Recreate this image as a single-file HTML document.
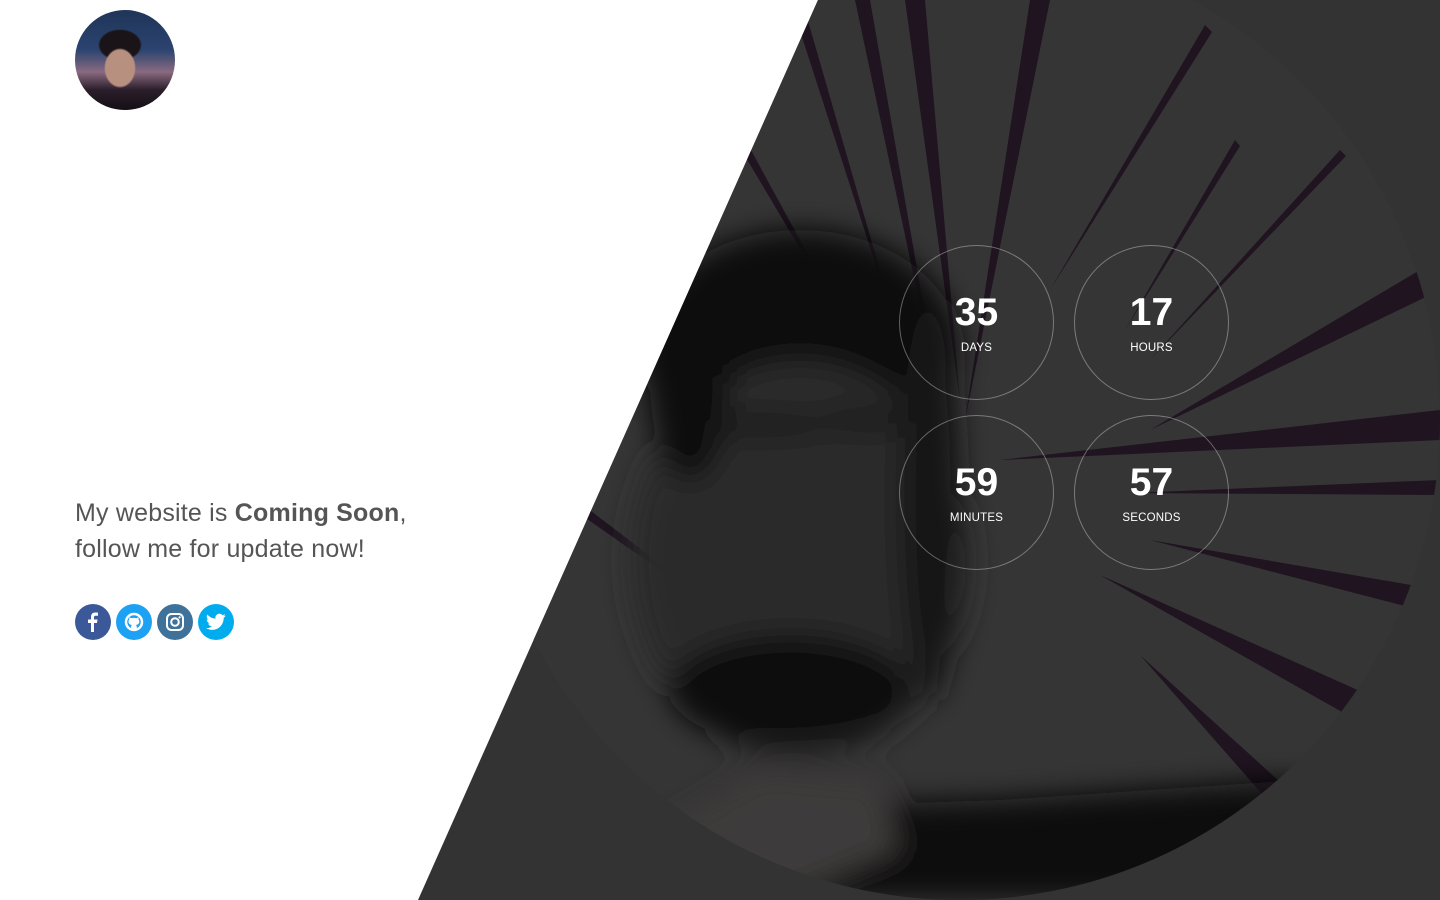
<!DOCTYPE html>
<html><head><meta charset="utf-8"><style>
*{margin:0;padding:0;box-sizing:border-box}
body{width:1440px;height:900px;overflow:hidden;background:#fff;font-family:"Liberation Sans",sans-serif;position:relative}
.bg{position:absolute;left:0;top:0;width:1440px;height:900px;clip-path:polygon(818px 0,1440px 0,1440px 900px,418px 900px)}
.avatar{position:absolute;left:75px;top:10px;width:100px;height:100px;border-radius:50%;overflow:hidden;background:radial-gradient(ellipse 16px 20px at 45% 58%,#b89080 0 90%,transparent 100%),radial-gradient(ellipse 22px 16px at 45% 35%,#1a1418 0 90%,transparent 100%),linear-gradient(180deg,#1f3458 0%,#2b4470 40%,#8a6a80 62%,#2a1e2a 80%,#150f16 100%)}
.txt{position:absolute;left:75px;top:495px;font-size:25px;line-height:36px;color:#555;letter-spacing:0.2px}
.txt b{color:#555}
.soc{position:absolute;left:75px;top:604px;display:flex;gap:5px}
.soc div{width:36px;height:36px;border-radius:50%;display:flex;align-items:center;justify-content:center}
.c{position:absolute;width:155px;height:155px;border:1px solid rgba(255,255,255,.35);border-radius:50%;color:#fff;text-align:center}
.c .n{font-size:39px;font-weight:bold;margin-top:45px;line-height:44px}
.c .l{font-size:11.5px;margin-top:7px;letter-spacing:.2px}
</style></head><body>
<div class="bg">
<svg width="1440" height="900" style="position:absolute;left:0;top:0">
<defs><filter id="b" x="-50%" y="-50%" width="200%" height="200%"><feGaussianBlur stdDeviation="14"/></filter>
<clipPath id="cc"><circle cx="960" cy="420" r="480"/></clipPath></defs>
<rect width="1440" height="900" fill="#333"/>
<g clip-path="url(#cc)">
<circle cx="960" cy="420" r="480" fill="#363536"/>
<g fill="#1f1420">
<polygon points="855,0 870,0 940,400"/><polygon points="905,0 925,0 960,400"/>
<polygon points="1030,0 1050,0 965,420"/><polygon points="1205,25 1212,32 1050,290"/>
<polygon points="1340,150 1346,156 1150,360"/><polygon points="1420,270 1430,295 1150,430"/>
<polygon points="1440,410 1440,440 1000,460"/><polygon points="1440,480 1440,495 1130,493"/>
<polygon points="1440,590 1420,610 1150,540"/><polygon points="1380,700 1365,725 1100,575"/>
<polygon points="1300,800 1285,820 1140,655"/><polygon points="790,0 802,0 900,340"/>
<polygon points="700,80 710,75 860,350"/><polygon points="560,500 570,495 760,640"/>
<polygon points="1235,140 1240,146 1125,330"/>
</g>
<g filter="url(#b)">
<ellipse cx="800" cy="350" rx="160" ry="120" fill="#0d0b0c"/>
<ellipse cx="800" cy="560" rx="170" ry="200" fill="#2c2929"/>
<ellipse cx="690" cy="380" rx="40" ry="100" fill="#0f0d0e"/>
<ellipse cx="790" cy="690" rx="120" ry="55" fill="#0f0d0e"/>
<ellipse cx="930" cy="500" rx="30" ry="200" fill="#151213"/>
<ellipse cx="760" cy="425" rx="70" ry="10" fill="#141213"/>
<ellipse cx="870" cy="420" rx="55" ry="10" fill="#141213"/>
<path d="M640 900 L700 810 L1000 800 L1300 780 L1400 900Z" fill="#0c0a0b"/>
<path d="M660 830 L760 770 L880 780 L900 850 L780 900 L680 900Z" fill="#3c3a3a"/>
</g>
</g>
</svg>
<div class="c" style="left:899px;top:245px"><div class="n">35</div><div class="l">DAYS</div></div>
<div class="c" style="left:1074px;top:245px"><div class="n">17</div><div class="l">HOURS</div></div>
<div class="c" style="left:899px;top:415px"><div class="n">59</div><div class="l">MINUTES</div></div>
<div class="c" style="left:1074px;top:415px"><div class="n">57</div><div class="l">SECONDS</div></div>
</div>
<div class="avatar"></div>
<div class="txt">My website is <b>Coming Soon</b>,<br>follow me for update now!</div>
<div class="soc">
<div style="background:#3b5998"><svg width="18" height="20" viewBox="0 0 18 20"><path d="M10 20V11h3l.5-3.5H10V5.5c0-1 .3-1.7 1.8-1.7H14V.7C13.6.6 12.5.5 11.3.5 8.7.5 7 2 7 4.9v2.6H4V11h3v9z" fill="#fff"/></svg></div>
<div style="background:#1da1f2"><svg width="20" height="20" viewBox="0 0 20 20"><circle cx="10" cy="10" r="8" fill="none" stroke="#fff" stroke-width="2.5"/><path d="M7 18v-3c0-1 .3-1.5 1-2-2-.3-3.5-1-3.5-3.5 0-.8.3-1.5.8-2-.1-.4-.2-1.2.1-2 .8 0 1.5.5 2 .8a7 7 0 0 1 5 0c.5-.3 1.2-.8 2-.8.3.8.2 1.6.1 2 .5.5.8 1.2.8 2 0 2.5-1.5 3.2-3.5 3.5.7.5 1 1 1 2v3z" fill="#fff"/></svg></div>
<div style="background:#3f729b"><svg width="20" height="20" viewBox="0 0 20 20"><rect x="2" y="2" width="16" height="16" rx="4.5" fill="none" stroke="#fff" stroke-width="2"/><circle cx="10" cy="10" r="3.8" fill="none" stroke="#fff" stroke-width="2"/><circle cx="14.6" cy="5.4" r="1.1" fill="#fff"/></svg></div>
<div style="background:#00acee"><svg width="20" height="18" viewBox="0 0 24 20"><path d="M23.6 2.4c-.9.4-1.8.6-2.8.8 1-.6 1.8-1.5 2.1-2.7-.9.6-2 1-3.1 1.2A4.8 4.8 0 0 0 11.5 6 13.8 13.8 0 0 1 1.6 1a4.8 4.8 0 0 0 1.5 6.5c-.8 0-1.5-.2-2.2-.6 0 2.400 1.7 4.4 3.9 4.8-.7.2-1.5.2-2.2.1.6 1.9 2.4 3.3 4.5 3.4A9.7 9.7 0 0 1 0 17.2 13.7 13.7 0 0 0 7.4 19.4c8.9 0 13.8-7.4 13.8-13.8v-.6c1-.7 1.8-1.5 2.4-2.6z" fill="#fff"/></svg></div>
</div>
</body></html>
